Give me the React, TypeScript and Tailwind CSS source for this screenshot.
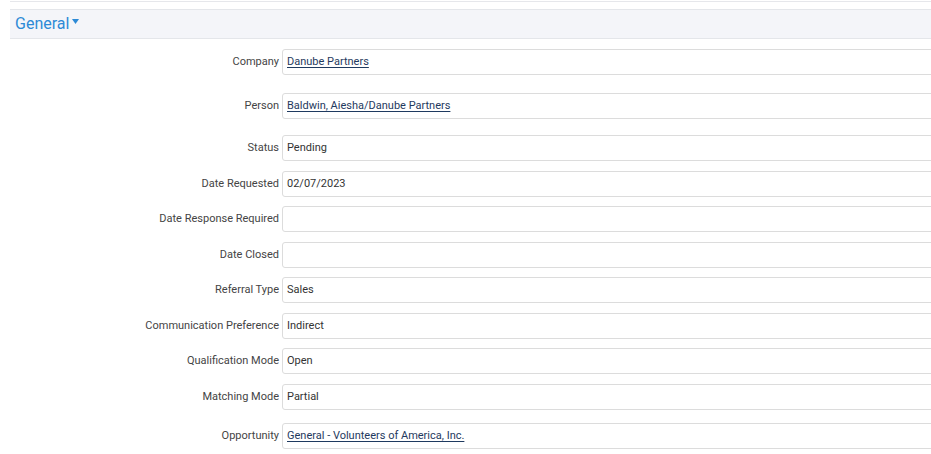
const fields: { label: string; value: string; link?: boolean; mt: string }[] = [
  { label: 'Company', value: 'Danube Partners', link: true, mt: 'mt-[10px]' },
  { label: 'Person', value: 'Baldwin, Aiesha/Danube Partners', link: true, mt: 'mt-[18px]' },
  { label: 'Status', value: 'Pending', mt: 'mt-[16px]' },
  { label: 'Date Requested', value: '02/07/2023', mt: 'mt-[10px]' },
  { label: 'Date Response Required', value: '', mt: 'mt-[9px]' },
  { label: 'Date Closed', value: '', mt: 'mt-[10px]' },
  { label: 'Referral Type', value: 'Sales', mt: 'mt-[9px]' },
  { label: 'Communication Preference', value: 'Indirect', mt: 'mt-[10px]' },
  { label: 'Qualification Mode', value: 'Open', mt: 'mt-[9px]' },
  { label: 'Matching Mode', value: 'Partial', mt: 'mt-[10px]' },
  { label: 'Opportunity', value: 'General - Volunteers of America, Inc.', link: true, mt: 'mt-[13px]' },
];

export default function App() {
  return (
    <div className="w-[931px] h-[454px] overflow-hidden bg-white font-['Roboto',_'Liberation_Sans',_sans-serif]">
      <div className="ml-[10px] h-[2px] border-b border-[#e6e7eb]"></div>

      <div className="ml-[10px] mt-[7px] h-[30px] bg-[#f4f5f9] border-y border-[#e4e6ea] flex items-center pl-[5px]">
        <span className="text-[16px] text-[#2d8ad6] leading-none">General</span>
        <svg width="7" height="5" viewBox="0 0 7 5" className="ml-[3px] mb-[5px]">
          <path d="M0 0 H7 L3.5 5 Z" fill="#2d8ad6" />
        </svg>
      </div>

      <div className="flex flex-col">
        {fields.map((f) => (
          <div key={f.label} className={`flex items-center ${f.mt}`}>
            <div className="w-[282px] shrink-0 pr-[3px] text-right text-[11px] text-[#444] whitespace-nowrap">{f.label}</div>
            <div className="w-[700px] shrink-0 h-[26px] border border-[#dcdcdc] rounded-[3px] flex items-center px-[4px] text-[11px] text-[#333]">
              {f.link ? (
                <span className="underline text-[#1f3a60] underline-offset-[2px]">{f.value}</span>
              ) : (
                <span>{f.value}</span>
              )}
            </div>
          </div>
        ))}
      </div>
    </div>
  );
}
